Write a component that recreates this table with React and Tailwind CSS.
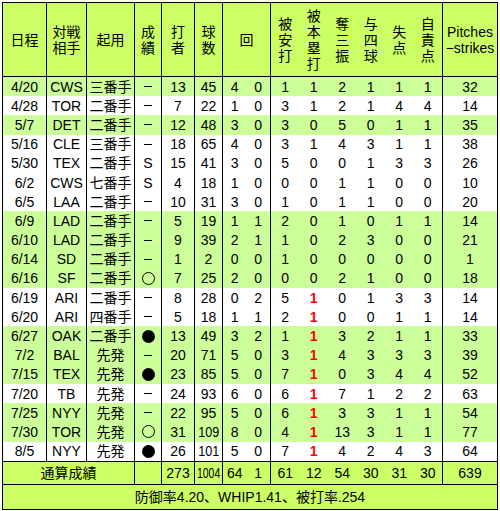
import React from "react";

const cols =
    "grid grid-cols-[44px_40px_48px_27px_33px_28px_23.5px_24.5px_28.5px_28.5px_28.5px_28.5px_28.5px_29.5px_54px]";

// 右罫線を引く列
const lined = [0, 1, 2, 3, 4, 5, 7, 13];

const games = [
    ["4/20", "CWS", "三番手", "-", "13", "45", "4", "0", "1", "1", "2", "1", "1", "1", "32"],
    ["4/28", "TOR", "二番手", "-", "7", "22", "1", "0", "3", "1", "2", "1", "4", "4", "14"],
    ["5/7", "DET", "二番手", "-", "12", "48", "3", "0", "3", "0", "5", "0", "1", "1", "35"],
    ["5/16", "CLE", "三番手", "-", "18", "65", "4", "0", "3", "1", "4", "3", "1", "1", "38"],
    ["5/30", "TEX", "二番手", "S", "15", "41", "3", "0", "5", "0", "0", "1", "3", "3", "26"],
    ["6/2", "CWS", "七番手", "S", "4", "18", "1", "0", "0", "0", "1", "1", "0", "0", "10"],
    ["6/5", "LAA", "二番手", "-", "10", "31", "3", "0", "1", "0", "1", "1", "0", "0", "20"],
    ["6/9", "LAD", "二番手", "-", "5", "19", "1", "1", "2", "0", "1", "0", "1", "1", "14"],
    ["6/10", "LAD", "二番手", "-", "9", "39", "2", "1", "1", "0", "2", "3", "0", "0", "21"],
    ["6/14", "SD", "二番手", "-", "1", "2", "0", "0", "1", "0", "0", "0", "0", "0", "1"],
    ["6/16", "SF", "二番手", "○", "7", "25", "2", "0", "0", "0", "2", "1", "0", "0", "18"],
    ["6/19", "ARI", "二番手", "-", "8", "28", "0", "2", "5", "1", "0", "1", "3", "3", "14"],
    ["6/20", "ARI", "四番手", "-", "5", "18", "1", "1", "2", "1", "0", "0", "1", "1", "14"],
    ["6/27", "OAK", "二番手", "●", "13", "49", "3", "2", "1", "1", "3", "2", "1", "1", "33"],
    ["7/2", "BAL", "先発", "-", "20", "71", "5", "0", "3", "1", "4", "3", "3", "3", "39"],
    ["7/15", "TEX", "先発", "●", "23", "85", "5", "0", "7", "1", "0", "3", "4", "4", "52"],
    ["7/20", "TB", "先発", "-", "24", "93", "6", "0", "6", "1", "7", "1", "2", "2", "63"],
    ["7/25", "NYY", "先発", "-", "22", "95", "5", "0", "6", "1", "3", "3", "1", "1", "54"],
    ["7/30", "TOR", "先発", "○", "31", "109", "8", "0", "4", "1", "13", "3", "1", "1", "77"],
    ["8/5", "NYY", "先発", "●", "26", "101", "5", "0", "7", "1", "4", "2", "4", "3", "64"],
];

const greenRows = ["4/20", "5/7", "6/9", "6/10", "6/14", "6/16", "6/27", "7/2", "7/15", "7/25", "7/30"];

const headers = [
    ["日程"],
    ["対戦", "相手"],
    ["起用"],
    ["成", "績"],
    ["打", "者"],
    ["球", "数"],
];
const statHeaders = [
    ["被", "安", "打"],
    ["被", "本", "塁", "打"],
    ["奪", "三", "振"],
    ["与", "四", "球"],
    ["失", "点"],
    ["自", "責", "点"],
];

function Mark({ value }) {
    if (value === "●") return <span className="w-[13px] h-[13px] rounded-full bg-black" />;
    if (value === "○") return <span className="w-[13px] h-[13px] rounded-full border border-black" />;
    if (value === "-") return <span className="w-[8px] h-[1px] bg-black" />;
    return <span>{value}</span>;
}

function Cell({ value, index, homer }) {
    const border = lined.includes(index) ? "border-r border-black" : "";
    let content = value;
    if (index === 3) content = <Mark value={value} />;
    else if (index === 9 && homer) content = <span className="text-[#ff0000] font-bold">{value}</span>;
    else if (index === 5 && value.length > 2) content = <span className="inline-block scale-x-90">{value}</span>;
    return <div className={`${border} flex items-center justify-center`}>{content}</div>;
}

export default function App() {
    return (
        <div className="w-[500px] h-[511px] bg-white pt-[2px] pl-[2px] text-black text-[14px] leading-none font-['Liberation_Sans','Noto_Sans_CJK_JP',sans-serif]">
            <div className="w-[496px] border border-black">
                {/* ヘッダー */}
                <div className={`${cols} h-[74px] bg-[#ccff66] border-b border-black leading-[16px]`}>
                    {headers.map((h, i) => (
                        <div key={i} className="border-r border-black flex flex-col items-center justify-center">
                            {h.map((t) => (
                                <span key={t}>{t}</span>
                            ))}
                        </div>
                    ))}
                    <div className="col-span-2 border-r border-black flex items-center justify-center">回</div>
                    {statHeaders.map((h, i) => (
                        <div
                            key={i}
                            className={`${i === 5 ? "border-r border-black" : ""} flex flex-col items-center justify-center`}
                        >
                            {h.map((t, j) => (
                                <span key={j}>{t}</span>
                            ))}
                        </div>
                    ))}
                    <div className="flex flex-col items-center justify-center">
                        <span>Pitches</span>
                        <span>−strikes</span>
                    </div>
                </div>

                {/* 試合ごとの成績 */}
                {games.map((g, r) => (
                    <div
                        key={g[0]}
                        className={`${cols} h-[19.2px] ${greenRows.includes(g[0]) ? "bg-[#ccff99]" : "bg-white"}`}
                    >
                        {g.map((v, i) => (
                            <Cell key={i} value={v} index={i} homer={r >= 11} />
                        ))}
                    </div>
                ))}

                {/* 通算 */}
                <div className={`${cols} h-[23px] bg-[#ccff66] border-t border-black`}>
                    <div className="col-span-3 border-r border-black flex items-center justify-center">通算成績</div>
                    <div className="border-r border-black" />
                    <div className="border-r border-black flex items-center justify-center">273</div>
                    <div className="border-r border-black flex items-center justify-center">
                        <span className="inline-block scale-x-75">1004</span>
                    </div>
                    <div className="flex items-center justify-center">64</div>
                    <div className="border-r border-black flex items-center justify-center">1</div>
                    {["61", "12", "54", "30", "31", "30"].map((v, i) => (
                        <div key={i} className={`${i === 5 ? "border-r border-black" : ""} flex items-center justify-center`}>
                            {v}
                        </div>
                    ))}
                    <div className="flex items-center justify-center">639</div>
                </div>

                <div className="h-[25px] bg-[#ccff66] border-t border-black flex items-center justify-center">
                    防御率4.20、WHIP1.41、被打率.254
                </div>
            </div>
        </div>
    );
}
